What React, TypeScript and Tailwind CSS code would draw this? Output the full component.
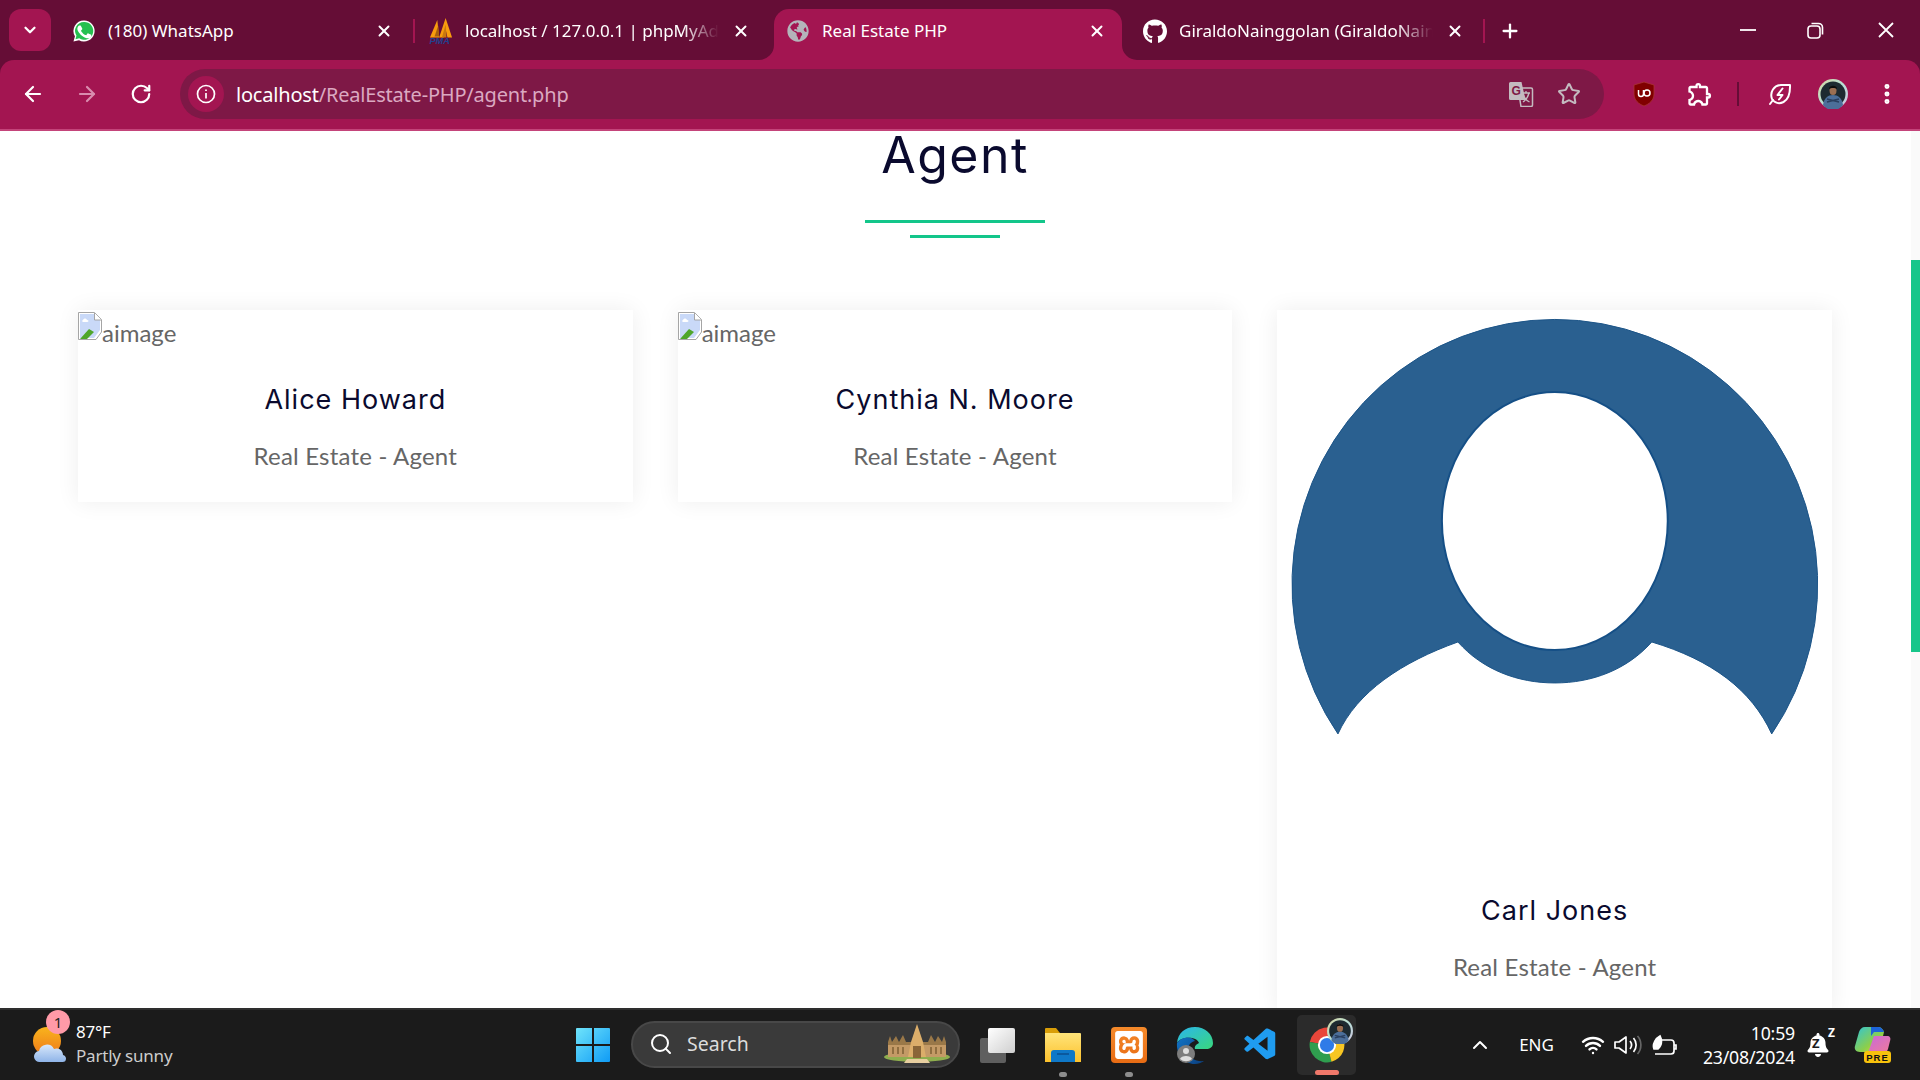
import { FC, ReactNode } from "react";
import { ArrowLeft, ArrowRight, ChevronDown, ChevronUp, EllipsisVertical, Plus, RotateCw, Search, Star, Wifi, X } from "lucide-react";
import { FaBell, FaGithub, FaGlobeAmericas } from "react-icons/fa";
import { MdOutlineExtension } from "react-icons/md";
import { SiXampp } from "react-icons/si";
import { VscVscode } from "react-icons/vsc";

const uiFont = "font-['Noto_Sans','Open_Sans',sans-serif]";

const WhatsAppIcon = () => (
  <svg width="26" height="26" viewBox="0 0 26 26">
    <path d="M13 1.500A11.400 11.400 0 0 0 3.200 18.700L1.600 24.500l6-1.600A11.400 11.400 0 1 0 13 1.500Z" fill="#fff" />
    <path d="M13 3.200A9.700 9.700 0 0 0 4.800 18l-1 3.900 4-1A9.700 9.700 0 1 0 13 3.200Z" fill="#25c04f" />
    <path d="M9.700 7.600c-.3-.6-.5-.6-.9-.6h-.7c-.3 0-.7.100-1 .5-.4.400-1.300 1.300-1.300 3.100s1.300 3.500 1.500 3.800c.2.200 2.600 4.100 6.400 5.600 3.100 1.200 3.800 1 4.500.9.700-.1 2.200-.9 2.500-1.800.3-.9.300-1.600.2-1.800-.1-.2-.3-.3-.7-.5l-2.500-1.200c-.4-.1-.6-.2-.9.200l-1.200 1.500c-.2.300-.4.300-.8.100-.4-.2-1.500-.6-2.900-1.800-1.100-1-1.800-2.100-2-2.500-.2-.4 0-.6.200-.8l.6-.7c.2-.2.200-.4.400-.6.100-.3.100-.5 0-.7L9.700 7.600Z" fill="#fff" />
  </svg>
);

const PmaIcon = () => (
  <svg width="26" height="30" viewBox="0 0 26 30">
    <path d="M1 22 9 3l2 19Z" fill="#f89c0e" />
    <path d="M11 22 18 1l7 21h-5l-2-9-2 9Z" fill="#f89c0e" />
    <path d="M6 21 10 9l1 12Z" fill="#a8600e" />
    <path d="M14 22 18 8l1 14Z" fill="#c9780f" />
    <text x="0.500" y="29" fontSize="10" fontStyle="italic" fontWeight="700" fill="#23408e" fontFamily="Liberation Sans">PMA</text>
  </svg>
);

const TranslateIcon = () => (
  <svg width="26" height="26" viewBox="0 0 26 26">
    <path d="M10 7h13a1.500 1.500 0 0 1 1.500 1.500V24a1.500 1.500 0 0 1-1.500 1.500H13L10 7Z" fill="#7e1846" stroke="#c4bbc0" strokeWidth="1.500" />
    <path d="M2.500 1h11l4 18H2.500A1.500 1.500 0 0 1 1 17.500v-15A1.500 1.500 0 0 1 2.500 1Z" fill="#c4bbc0" />
    <text x="3.500" y="14" fontSize="12" fontWeight="700" fill="#7e1846" fontFamily="Liberation Sans">G</text>
    <path d="M14 12h8M18 10v2M21 12c-1 4-3 7-6 9M15.500 14c1 3 3 5.500 6 7" fill="none" stroke="#c4bbc0" strokeWidth="1.300" />
  </svg>
);

const UBlockIcon = () => (
  <svg width="24" height="26" viewBox="0 0 24 26">
    <path d="M12 1 2 4v9c0 6 4.500 10 10 12 5.500-2 10-6 10-12V4L12 1Z" fill="#800000" stroke="#a33" strokeWidth="0.800" />
    <path d="M6.500 9v4a2.500 2.500 0 0 0 5 0V9" fill="none" stroke="#fff" strokeWidth="1.500" />
    <circle cx="15" cy="12" r="3" fill="none" stroke="#fff" strokeWidth="1.500" />
  </svg>
);

const LeafIcon = () => (
  <svg width="24" height="24" viewBox="0 0 24 24" fill="none" stroke="#fff" strokeWidth="2" strokeLinejoin="round" strokeLinecap="round">
    <path d="M4 17C1.500 10 6 3.500 13 3h9c.3 8-1 14-6.500 17-4 2-8.500 1-11.500-3Z" />
    <path d="M14.500 6.500 9.500 13h5l-3.500 4.500" />
    <path d="M5 18l-3 4" />
  </svg>
);

const ProfilePhoto: FC<{ size: number }> = ({ size }) => (
  <svg width={size} height={size} viewBox="0 0 30 30">
    <defs>
      <linearGradient id={`ring${size}`} x1="0" y1="0" x2="1" y2="1">
        <stop offset="0" stopColor="#d8d6a0" />
        <stop offset="0.500" stopColor="#b7e0d6" />
        <stop offset="1" stopColor="#cfc2e0" />
      </linearGradient>
    </defs>
    <circle cx="15" cy="15" r="15" fill={`url(#ring${size})`} />
    <circle cx="15" cy="15" r="12.500" fill="#1d2a30" />
    <path d="M5 26c1-7 5-10 10-10s9 3 10 10a12.500 12.500 0 0 1-20 0Z" fill="#4c6f9a" />
    <path d="M9 20l12 3M21 20 9 23" stroke="#2a4060" strokeWidth="1.500" />
    <ellipse cx="15" cy="11.500" rx="3.500" ry="4.500" fill="#9b6f52" />
    <path d="M11 10c0-4 8-4.500 8 0-2-1.500-6-1.500-8 0Z" fill="#0c0c0c" />
  </svg>
);

const WeatherIcon = () => (
  <svg width="38" height="36" viewBox="0 0 38 36">
    <defs>
      <linearGradient id="sun" x1="0" y1="0" x2="0" y2="1">
        <stop offset="0" stopColor="#f9b41c" />
        <stop offset="1" stopColor="#ee7a1a" />
      </linearGradient>
      <linearGradient id="cloud" x1="0" y1="0" x2="0" y2="1">
        <stop offset="0" stopColor="#d8e8fb" />
        <stop offset="1" stopColor="#8fb4e8" />
      </linearGradient>
    </defs>
    <circle cx="15" cy="14" r="14" fill="url(#sun)" />
    <path d="M8 35a5.500 5.500 0 0 1-1-11 8 8 0 0 1 15-2 6.500 6.500 0 0 1 9 6c2 .5 3 2 3 3.500a3.500 3.500 0 0 1-3.500 3.500Z" fill="url(#cloud)" />
  </svg>
);

const WindowsIcon = () => (
  <svg width="36" height="36" viewBox="0 0 36 36">
    <defs>
      <linearGradient id="win" x1="0" y1="0" x2="1" y2="1">
        <stop offset="0" stopColor="#6fe4fb" />
        <stop offset="1" stopColor="#0f9bf5" />
      </linearGradient>
    </defs>
    <path d="M1 2a1 1 0 0 1 1-1h15v16H1ZM19 1h15a1 1 0 0 1 1 1v15H19ZM1 19h16v16H2a1 1 0 0 1-1-1ZM19 19h16v15a1 1 0 0 1-1 1H19Z" fill="url(#win)" />
  </svg>
);

const TempleIcon = () => (
  <svg width="70" height="40" viewBox="0 0 70 40">
    <ellipse cx="35" cy="33" rx="33" ry="5" fill="#8fae4e" />
    <path d="M6 18h58v15H6Z" fill="#c49a66" />
    <path d="M6 18l2-6 2 6 4-6 3 6 4-7 3 7h22l3-7 4 7 3-6 4 6 2-6 2 6v3H6Z" fill="#9a7848" />
    <path d="M35 0l2 6 4 12 3 15H26l3-15 4-12Z" fill="#dcae6a" />
    <path d="M31 22h8v12h-8Z" fill="#8a6638" />
    <path d="M25 35h20l3 4H22Z" fill="#e8cfa0" />
    <path d="M11 23v7M16 23v7M21 23v7M49 23v7M54 23v7M59 23v7" stroke="#7f6034" strokeWidth="1.500" />
  </svg>
);

const TaskViewIcon = () => (
  <svg width="36" height="36" viewBox="0 0 36 36">
    <defs>
      <linearGradient id="tv" x1="0" y1="0" x2="1" y2="1">
        <stop offset="0" stopColor="#fff" />
        <stop offset="1" stopColor="#cfcfcf" />
      </linearGradient>
    </defs>
    <rect x="1" y="11" width="26" height="25" rx="2" fill="#5f5f5f" />
    <rect x="9" y="1" width="27" height="25" rx="2" fill="url(#tv)" />
  </svg>
);

const ExplorerIcon = () => (
  <svg width="36" height="36" viewBox="0 0 36 36">
    <defs>
      <linearGradient id="folder" x1="0" y1="0" x2="0" y2="1">
        <stop offset="0" stopColor="#ffe47a" />
        <stop offset="1" stopColor="#fcc12c" />
      </linearGradient>
    </defs>
    <path d="M0 2a1 1 0 0 1 1-1h10l4 5h-15Z" fill="#d99e08" />
    <path d="M0 6h35a1 1 0 0 1 1 1v28H0Z" fill="url(#folder)" />
    <path d="M6 35V26a3 3 0 0 1 3-3h18a3 3 0 0 1 3 3v9Z" fill="#0f78c8" />
    <path d="M12 27h12" stroke="#0b4f91" strokeWidth="1.500" />
  </svg>
);

const XamppIcon = () => (
  <div className="flex items-center justify-center w-9 h-9 rounded-[4px] bg-gradient-to-b from-[#f58a2a] to-[#e86c14]">
    <SiXampp size={28} className="text-white" />
  </div>
);

const EdgeIcon = () => (
  <svg width="38" height="38" viewBox="0 0 38 38">
    <defs>
      <linearGradient id="edgeA" x1="0" y1="0" x2="1" y2="1">
        <stop offset="0" stopColor="#2bb6ee" />
        <stop offset="1" stopColor="#39d77c" />
      </linearGradient>
      <linearGradient id="edgeB" x1="0" y1="0" x2="1" y2="1">
        <stop offset="0" stopColor="#1173c5" />
        <stop offset="1" stopColor="#0c3f7e" />
      </linearGradient>
    </defs>
    <path d="M1 17C2 7 9 1 19 1c10 0 18 7 18 16 0 4-3 6-7 6H19c-1-3 2-5 4-6-2-7-18-7-22 0Z" fill="url(#edgeA)" />
    <path d="M1 17c4-6 14-8 18-2-5 1-8 6-7 11 1 6 8 10 16 9-3 2-6 3-9 3C8 38 0 28 1 17Z" fill="url(#edgeB)" />
    <circle cx="10" cy="28" r="9" fill="#7d7d7d" />
    <circle cx="10" cy="25" r="3" fill="#dedede" />
    <path d="M4 33c1-4 11-4 12 0a9 9 0 0 1-12 0Z" fill="#dedede" />
  </svg>
);

const ChromeIcon = () => (
  <svg width="38" height="38" viewBox="0 0 48 48">
    <path d="M24 24 43.050 13A22 22 0 0 0 2.300 20.200Z" fill="#e8463a" />
    <path d="M24 24 2.300 20.200A22 22 0 0 0 29.700 45.250Z" fill="#2f9e4f" />
    <path d="M24 24 29.700 45.250A22 22 0 0 0 43.050 13Z" fill="#f8c623" />
    <circle cx="24" cy="24" r="11.500" fill="#fff" />
    <circle cx="24" cy="24" r="9" fill="#2f7be8" />
  </svg>
);

const CopilotIcon = () => (
  <svg width="38" height="36" viewBox="0 0 38 36">
    <defs>
      <linearGradient id="copA" x1="0" y1="0" x2="1" y2="1">
        <stop offset="0" stopColor="#2fc5d8" />
        <stop offset="0.600" stopColor="#8ccf4a" />
        <stop offset="1" stopColor="#f4d03f" />
      </linearGradient>
      <linearGradient id="copB" x1="0" y1="0" x2="1" y2="1">
        <stop offset="0" stopColor="#c86ad8" />
        <stop offset="1" stopColor="#f07a9a" />
      </linearGradient>
    </defs>
    <path d="M12 0h13c3 0 5 2 6 5l-5 20H7c-4 0-6-3-5-6l4-14c1-3 3-5 6-5Z" fill="url(#copA)" />
    <path d="M18 0h7c3 0 5 2 6 5H21l-3 4Z" fill="#1c63d8" />
    <path d="M21 9h13c3 0 4 2 3 5l-2 8c-1 3-3 4-6 4H15Z" fill="url(#copB)" />
    <rect x="11" y="24" width="27" height="12" rx="3" fill="#f8c20c" />
    <text x="24.500" y="33.500" textAnchor="middle" fontSize="9.500" fontWeight="700" letterSpacing="1" fill="#111" fontFamily="Liberation Sans">PRE</text>
  </svg>
);

const BrokenImage = () => (
  <svg width="24" height="28" viewBox="0 0 24 28" className="shrink-0">
    <path d="M.5.500h16l7 7V20L18 27.500H.5Z" fill="#fff" stroke="#a5a5a5" />
    <path d="M2 2h14v6h6v10L16 26H2Z" fill="#c9d9f8" />
    <path d="M16.500 1v7h7" fill="#fff" stroke="#a5a5a5" />
    <path d="M2 27l9-10 5 3-7 7Z" fill="#4fa62b" />
    <path d="M5 8c1-2 3-2 4 0 2 0 2 2 0 2H5c-1 0-1-2 0-2Z" fill="#fff" />
  </svg>
);

// the silhouette image on the third card
const Silhouette = () => (
  <svg viewBox="0 0 555 564" className="block w-full h-[564px]">
    <path
      d="M61 424A263 265 0 1 1 495 424C475 380 435 350 375 332C350 360 315 373 278 373C241 373 206 360 181 332C125 352 80 382 61 424Z"
      fill="#2a6090"
      stroke="#1c5488"
      strokeWidth="1"
    />
    <ellipse cx="278" cy="211" rx="113" ry="129" fill="#fff" stroke="#154f86" strokeWidth="2" />
  </svg>
);

interface TabProps {
  icon: ReactNode;
  title: string;
  width: string;
  iconMargin: string;
  closeMargin: string;
  active?: boolean;
  fade?: boolean;
}

const Tab: FC<TabProps> = (props) => (
  <div
    className={`relative flex items-center h-[51px] pb-[7px] shrink-0 ${props.width} ${
      props.active ? "bg-[#a31551] rounded-t-[15px]" : ""
    }`}
  >
    {props.active && (
      <>
        <svg width="15" height="15" viewBox="0 0 15 15" className="absolute -left-[15px] bottom-0">
          <path d="M15 0v15H0A15 15 0 0 0 15 0Z" fill="#a31551" />
        </svg>
        <svg width="15" height="15" viewBox="0 0 15 15" className="absolute -right-[15px] bottom-0">
          <path d="M0 0v15h15A15 15 0 0 1 0 0Z" fill="#a31551" />
        </svg>
      </>
    )}
    <div className={`flex justify-center w-6 shrink-0 ${props.iconMargin}`}>{props.icon}</div>
    <div
      className={`flex-1 ml-3 whitespace-nowrap overflow-hidden text-white text-[17px] ${
        props.fade ? "[mask-image:linear-gradient(to_right,black_84%,transparent_98%)]" : ""
      }`}
    >
      {props.title}
    </div>
    <X size={18} strokeWidth={2.6} className={`text-white shrink-0 ml-2 ${props.closeMargin}`} />
  </div>
);

const Separator = () => <div className="w-[2px] h-6 mb-[7px] bg-[#a31551] shrink-0" />;

const TabStrip = () => (
  <div className="flex items-start h-[60px] bg-[#650d36] pt-[9px] pl-[9px]">
    <div className="flex items-center justify-center w-[42px] h-[42px] rounded-[12px] bg-[#a31551] shrink-0">
      <ChevronDown size={18} strokeWidth={3} className="text-white" />
    </div>
    <div className="flex items-center ml-[9px]">
      <Tab icon={<WhatsAppIcon />} title="(180) WhatsApp" width="w-[353px]" iconMargin="ml-[12px]" closeMargin="mr-[20px]" />
      <Separator />
      <Tab icon={<PmaIcon />} title="localhost / 127.0.0.1 | phpMyAdmin" width="w-[359px]" iconMargin="ml-[14px]" closeMargin="mr-[24px]" fade />
      <Tab icon={<FaGlobeAmericas size={22} className="text-[#b4b4ba]" />} title="Real Estate PHP" width="w-[348px]" iconMargin="ml-[12px]" closeMargin="mr-[16px]" active />
      <Tab icon={<FaGithub size={25} className="text-white" />} title="GiraldoNainggolan (GiraldoNainggolan)" width="w-[361px]" iconMargin="ml-[21px]" closeMargin="mr-[19px]" fade />
      <Separator />
      <Plus size={22} strokeWidth={2.5} className="text-white ml-[14px] mb-[7px]" />
    </div>
    <div className="flex items-center ml-auto h-[42px] pr-[26px] text-white">
      <svg width="16" height="16" viewBox="0 0 16 16"><path d="M0 8h16" stroke="#fff" strokeWidth="1.800" /></svg>
      <svg width="17" height="17" viewBox="0 0 17 17" fill="none" stroke="#fff" strokeWidth="1.600" className="ml-[51px]">
        <rect x="1" y="4" width="12" height="12" rx="3" />
        <path d="M4.500 1.500h7a4 4 0 0 1 4 4v7" />
      </svg>
      <svg width="16" height="16" viewBox="0 0 16 16" className="ml-[54px]"><path d="M1 1l14 14M15 1 1 15" stroke="#fff" strokeWidth="1.800" /></svg>
    </div>
  </div>
);

const Toolbar = () => (
  <div className="bg-[#650d36]">
    <div className="flex items-center h-[71px] pb-[2px] rounded-t-[14px] bg-[#a31551] border-b-2 border-[#c4447a]">
      <ArrowLeft size={24} strokeWidth={2.2} className="text-white ml-[21px]" />
      <ArrowRight size={24} strokeWidth={2.2} className="text-[#d98cae] ml-[30px]" />
      <RotateCw size={22} strokeWidth={2.4} className="text-white ml-[31px]" />
      <div className="flex items-center w-[1424px] h-[50px] ml-[28px] rounded-full bg-[#7e1846]">
        <div className="flex items-center justify-center w-9 h-9 ml-[8px] rounded-full bg-[#a31551]">
          <svg width="20" height="20" viewBox="0 0 20 20" fill="none" stroke="#fff" strokeWidth="1.700">
            <circle cx="10" cy="10" r="8.500" />
            <path d="M10 9v5.500M10 5.500v1.500" />
          </svg>
        </div>
        <div className={`ml-3 pt-[2px] text-[20px] tracking-[-0.2px] whitespace-nowrap text-white ${uiFont}`}>
          localhost<span className="text-[#dba9c1]">/RealEstate-PHP/agent.php</span>
        </div>
        <div className="ml-auto flex items-center gap-[23px] pr-[23px]">
          <TranslateIcon />
          <Star size={24} strokeWidth={2} className="text-[#c4bbc0]" />
        </div>
      </div>
      <div className="ml-[28px] flex justify-center w-[24px]"><UBlockIcon /></div>
      <MdOutlineExtension size={28} className="text-white ml-[30px]" />
      <div className="w-[2px] h-[24px] bg-[#650d36] ml-[23px]" />
      <div className="ml-[29px]"><LeafIcon /></div>
      <div className="ml-[26px]"><ProfilePhoto size={30} /></div>
      <EllipsisVertical size={26} strokeWidth={2.6} className="text-white ml-[26px]" />
    </div>
  </div>
);

const AgentCard: FC<{ name: string; image?: ReactNode }> = ({ name, image }) => (
  <div className="bg-white shadow-[0_0_22px_rgba(0,0,0,0.07)] pb-[31px]">
    {image ?? (
      <div className="flex items-start h-[53px] pt-[2px] text-[24px] text-[#666] font-['Lato',sans-serif]">
        <BrokenImage />
        <span className="mt-[7px] leading-7">aimage</span>
      </div>
    )}
    <h5 className="mt-[21px] text-center text-[27px] leading-[32px] text-[#0a0a2e] font-['Inter',sans-serif] tracking-[1px]">{name}</h5>
    <p className="mt-[25px] text-center text-[24px] leading-[30px] tracking-[0.2px] text-[#666] font-['Lato',sans-serif]">Real Estate - Agent</p>
  </div>
);

const Page = () => (
  <div className="flex flex-1 min-h-0 overflow-hidden bg-white">
    <div className="flex-1 min-w-0 pl-[78px] pr-[79px]">
      <h2 className="text-center text-[50px] leading-[48px] tracking-[1.5px] text-[#0a0a2e] font-['Inter',sans-serif] font-normal">Agent</h2>
      <div className="flex flex-col items-center mt-[41px] gap-[12px]">
        <div className="w-[180px] h-[3px] bg-[#13c68a]" />
        <div className="w-[90px] h-[3px] bg-[#13c68a]" />
      </div>
      <div className="grid grid-cols-3 items-start gap-[45px] mt-[72px]">
        <AgentCard name="Alice Howard" />
        <AgentCard name="Cynthia N. Moore" />
        <AgentCard name="Carl Jones" image={<Silhouette />} />
      </div>
    </div>
    <div className="w-[9px] pt-[129px] shrink-0 bg-[#fafafa]">
      <div className="h-[392px] bg-[#17c68a]" />
    </div>
  </div>
);

const TaskSlot: FC<{ children: ReactNode }> = ({ children }) => (
  <div className="relative flex items-center justify-center w-[66px] h-full shrink-0">{children}</div>
);

const Dot = () => <span className="absolute bottom-[3px] w-[8px] h-[5px] rounded-full bg-[#8d8d8d]" />;

const Taskbar = () => (
  <div className={`flex items-center h-[72px] shrink-0 bg-[#1b1b1b] border-t-2 border-[#2e2e2e] text-white ${uiFont}`}>
    <div className="relative flex items-center w-[575px] pl-[32px] shrink-0">
      <WeatherIcon />
      <span className="absolute left-[46px] -top-[10px] flex items-center justify-center w-6 h-6 rounded-full bg-[#ff9aa8] text-[#222] text-[15px]">1</span>
      <div className="ml-[6px] mb-[2px] text-[17px] leading-[24px] tracking-[-0.2px]">
        <div>87°F</div>
        <div className="text-[#cdcdcd]">Partly sunny</div>
      </div>
    </div>
    <WindowsIcon />
    <div className="flex items-center justify-between w-[329px] h-[47px] ml-[20px] mb-[2px] pl-[16px] pr-[6px] rounded-full bg-[#3a3a3a] border-2 border-[#484848] shrink-0">
      <div className="flex items-center gap-[14px]">
        <Search size={24} strokeWidth={2} className="text-white" />
        <span className="text-[19.500px] text-[#dcdcdc]">Search</span>
      </div>
      <TempleIcon />
    </div>
    <div className="flex items-center h-full ml-[4px]">
      <TaskSlot><TaskViewIcon /></TaskSlot>
      <TaskSlot><ExplorerIcon /><Dot /></TaskSlot>
      <TaskSlot><XamppIcon /><Dot /></TaskSlot>
      <TaskSlot><EdgeIcon /></TaskSlot>
      <TaskSlot><VscVscode size={38} className="text-[#1f9cf0]" /></TaskSlot>
      <div className="relative flex items-center justify-center w-[59px] h-[60px] rounded-[5px] bg-[#2b2b2b] shrink-0 ml-[3px]">
        <ChromeIcon />
        <span className="absolute right-[3px] top-[3px]"><ProfilePhoto size={26} /></span>
        <span className="absolute bottom-0 w-[24px] h-[5px] rounded-full bg-[#f0786a]" />
      </div>
    </div>
    <div className="flex items-center ml-auto pr-[29px]">
      <ChevronUp size={24} strokeWidth={2} className="text-white" />
      <span className="ml-[27px] text-[17px]">ENG</span>
      <Wifi size={24} strokeWidth={2.4} className="ml-[27px] text-white" />
      <svg width="30" height="24" viewBox="0 0 30 24" fill="none" stroke="#fff" strokeWidth="1.700" className="ml-[8px]">
        <path d="M2 9h4l7-5v16l-7-5H2Z" strokeLinejoin="round" />
        <path d="M17 8c2 2.500 2 5.500 0 8M20.500 5c3.500 4 3.500 10 0 14" />
        <path d="M24.500 3c4.500 5 4.500 13 0 18" stroke="#666" />
      </svg>
      <svg width="26" height="24" viewBox="0 0 26 24" fill="none" stroke="#fff" strokeWidth="1.700" className="ml-[9px]">
        <path d="M9 7h10a3 3 0 0 1 3 3v8a3 3 0 0 1-3 3H3M22 12h2v4h-2" />
        <path d="M2 16c-2-5 2-11 6-13 2 4 2 9-2 13Z" fill="#fff" />
      </svg>
      <div className="ml-[25px] text-right text-[17.700px] leading-[24px] tracking-[-0.2px]">
        <div>10:59</div>
        <div>23/08/2024</div>
      </div>
      <div className="relative flex ml-[11px]">
        <FaBell size={24} className="text-white" />
        <span className="absolute left-[6px] top-[4px] text-[13px] font-bold leading-none text-[#1b1b1b]">Z</span>
        <span className="absolute -right-[5px] -top-[6px] text-[12px] font-bold leading-none text-white">Z</span>
      </div>
      <div className="ml-[23px]"><CopilotIcon /></div>
    </div>
  </div>
);

export default function App() {
  return (
    <div className={`flex flex-col w-screen h-screen overflow-hidden ${uiFont}`}>
      <TabStrip />
      <Toolbar />
      <Page />
      <Taskbar />
    </div>
  );
}
